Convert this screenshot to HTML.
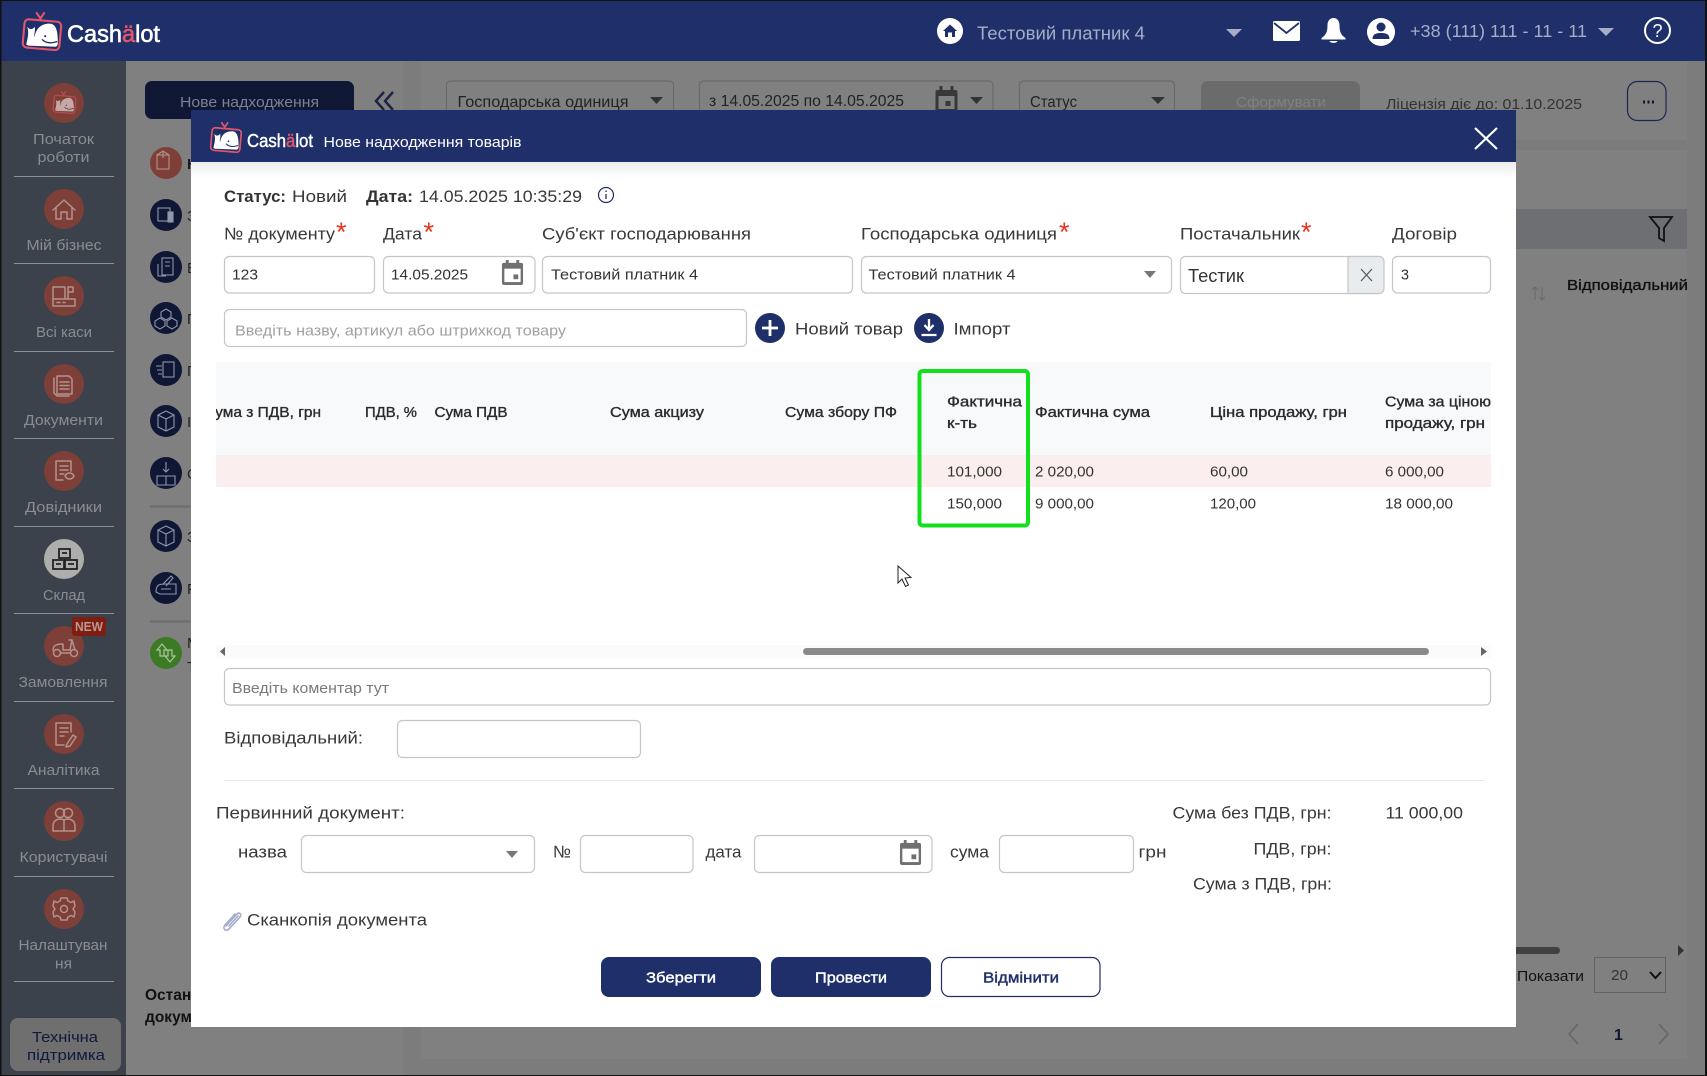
<!DOCTYPE html>
<html lang="uk">
<head>
<meta charset="utf-8">
<title>Cashälot — Нове надходження товарів</title>
<style>
html,body{margin:0;padding:0;background:#808080;width:1707px;height:1076px;overflow:hidden}
svg{display:block}
text{font-family:"Liberation Sans","DejaVu Sans",sans-serif;white-space:pre}
.s{font-size:15px;fill:#8b8d90}
.l{font-size:17px;fill:#383838}
.i{font-size:15px;fill:#333}
.h{font-size:14.5px;fill:#2b2b2b;stroke:#2b2b2b;stroke-width:.35}
.c{font-size:14.5px;fill:#333}
.b{font-size:15px;stroke-width:.4}
.dim{font-size:15px;fill:#222}
.box{fill:#fff;stroke:#c6c6c6;stroke-width:1.2}
.ic{fill:none;stroke:#b3928c;stroke-width:1.5;stroke-linejoin:round;stroke-linecap:round}
</style>
</head>
<body>
<svg xmlns="http://www.w3.org/2000/svg" width="1707" height="1076" viewBox="0 0 1707 1076">
<defs>
<linearGradient id="sh" x1="0" y1="0" x2="0" y2="1"><stop offset="0" stop-color="#ececec"/><stop offset="1" stop-color="#fff"/></linearGradient>
<clipPath id="tb"><rect x="216" y="362" width="1275" height="170"/></clipPath>
<symbol id="logo" viewBox="0 0 40 37">
<path d="M15 1 L18.5 6 L22 1 M18.5 6 V8" fill="none" stroke="#e2566a" stroke-width="2" stroke-linecap="round"/>
<rect x="2.5" y="8" width="35" height="27" rx="4" transform="rotate(5 20 21)" fill="none" stroke="#e2566a" stroke-width="2"/>
<path d="M5 31 C6 25 8 21 6 14 C8 17 11 17 13 14 C14 18 12 21 13 24 C14 16 19 11 27 11 C33 11 35.500 17 35 31 L33.500 33 L7 32 Z" fill="#fff"/>
<path d="M20 26 C24 30 29 30 34.500 28" fill="none" stroke="#1e2f6a" stroke-width="1.2"/>
<circle cx="23" cy="23" r="1" fill="#1e2f6a"/>
</symbol>
<symbol id="cal" viewBox="0 0 24 26">
<rect x="1" y="3" width="22" height="23" rx="2" fill="#707070"/>
<rect x="5" y="0" width="3" height="5" fill="#707070"/><rect x="16" y="0" width="3" height="5" fill="#707070"/>
<rect x="3.500" y="9" width="17" height="14" fill="#fff"/><rect x="13" y="15" width="5" height="5" fill="#707070"/>
</symbol>
</defs>

<!-- page background -->
<rect width="1707" height="1076" fill="#7c7c7c"/>
<rect x="126" y="61" width="277" height="1015" fill="#808080"/>
<rect x="421" y="61" width="1266" height="998" fill="#808080"/>
<rect x="421" y="140" width="1266" height="10" fill="#7b7b7b"/>
<rect x="421" y="209" width="1266" height="40" fill="#6e6f73"/>

<!-- top bar -->
<rect width="1707" height="61" fill="#1e2f6a"/>
<use href="#logo" x="21" y="12" width="42" height="39"/>
<text x="67" y="42" font-size="24" fill="#fff" stroke="#fff" stroke-width=".6" textLength="93" lengthAdjust="spacingAndGlyphs">Cash<tspan fill="#e2566a" stroke="#e2566a">ä</tspan>lot</text>
<circle cx="950" cy="31" r="13" fill="#fff"/>
<path d="M943 31 L950 24.500 L957 31 H955 V37 H952 V32.500 H948 V37 H945 V31 Z" fill="#1e2f6a"/>
<text x="977" y="39.500" font-size="18" fill="#a5aec6" textLength="168" lengthAdjust="spacingAndGlyphs">Тестовий платник 4</text>
<path d="M1226 29 H1242 L1234 37 Z" fill="#a5aec6"/>
<rect x="1273" y="21" width="27" height="20" rx="1.500" fill="#fff"/>
<path d="M1274 23 L1286.500 33 L1299 23" fill="none" stroke="#1e2f6a" stroke-width="1.800"/>
<path d="M1333.500 18 C1337 18 1339.500 21 1339.500 25 C1339.500 32 1341 35 1345.500 38 V39.500 H1321.500 V38 C1326 35 1327.500 32 1327.500 25 C1327.500 21 1330 18 1333.500 18 Z" fill="#fff"/>
<path d="M1329.500 41 H1337.500 C1337 43.500 1330 43.500 1329.500 41 Z" fill="#fff"/>
<circle cx="1381" cy="32" r="14" fill="#fff"/>
<circle cx="1381" cy="27" r="4.500" fill="#1e2f6a"/>
<path d="M1372.500 39 C1372.500 34 1376 33 1381 33 C1386 33 1389.500 34 1389.500 39 Z" fill="#1e2f6a"/>
<text x="1410" y="37" font-size="17.500" fill="#a5aec6" textLength="177" lengthAdjust="spacingAndGlyphs">+38 (111) 111 - 11 - 11</text>
<path d="M1598 28 H1614 L1606 36 Z" fill="#a5aec6"/>
<circle cx="1657.500" cy="30.500" r="12.500" fill="none" stroke="#fff" stroke-width="2"/>
<text x="1657.500" y="37" font-size="18" fill="#fff" text-anchor="middle">?</text>

<!-- sidebar -->
<rect y="61" width="126" height="1015" fill="#3b424c"/>
<g fill="#7e3f38">
<circle cx="64" cy="103" r="20"/><circle cx="64" cy="209" r="20"/><circle cx="64" cy="296" r="20"/><circle cx="64" cy="384" r="20"/><circle cx="64" cy="471" r="20"/><circle cx="64" cy="646" r="20"/><circle cx="64" cy="734" r="20"/><circle cx="64" cy="821" r="20"/><circle cx="64" cy="909" r="20"/>
</g>
<circle cx="64" cy="559" r="20" fill="#aeaeae"/>
<g stroke="#8d9097" stroke-width="1" fill="none">
<path d="M14 176.500H114M14 263.500H114M14 351.500H114M14 438.500H114M14 526.500H114M14 613.500H114M14 701.500H114M14 788.500H114M14 876.500H114M14 981.500H114"/>
</g>
<use href="#logo" x="52" y="91" width="25" height="23" opacity=".55"/>
<path class="ic" d="M53 210 L64 200 L75 210 M56 208 V219 H61 V212 H67 V219 H72 V208"/>
<path class="ic" d="M53 299 H75 V306 H53 Z M53 299 V287 H65 V299 M68 299 V292 H73 V287 H68 V292 M57 302.500 H60 M63 302.500 H65"/>
<path class="ic" d="M57 376 H69 L72 379 V394 H57 Z M54 378 V393 L57 396 H69 M60 382 H69 M60 385.500 H69 M60 389 H69"/>
<path class="ic" d="M56 461 H71 V471 M56 461 V480 H63 M60 466 H68 M60 470 H68 M60 474 H64"/>
<path class="ic" d="M65 476 C67 472 72 472 74 476 C72 480 67 480 65 476 Z"/>
<g fill="none" stroke="#222" stroke-width="1.800">
<rect x="59" y="549" width="11" height="9"/><rect x="53" y="560" width="11" height="9"/><rect x="65" y="560" width="12" height="9"/>
<path d="M62 553H67M56 564H61M68 564H74"/>
</g>
<circle class="ic" cx="57" cy="653" r="3.500"/><circle class="ic" cx="74" cy="653" r="3.500"/>
<path class="ic" d="M53 650 C53 645 57 644 63 644 V650 H70 L72 640 H69 M72 640 L75 650 M60.500 653 H70"/>
<rect x="72" y="617" width="34" height="19" rx="3" fill="#7f1d10"/>
<text x="75" y="631" font-size="13" font-weight="bold" fill="#b99a94" textLength="28" lengthAdjust="spacingAndGlyphs">NEW</text>
<path class="ic" d="M56 723 H71 V732 M56 723 V745 H64 M60 728 H68 M60 732 H68 M60 736 H64 M67 744 L73 735 L76 737 L70 746 L66 747 Z"/>
<circle class="ic" cx="60" cy="813" r="4.500"/><circle class="ic" cx="68" cy="813" r="4.500"/>
<path class="ic" d="M53 831 V826 C53 821 57 819 60 819 C63 819 64 820 64 821 C64 820 65 819 68 819 C71 819 75 821 75 826 V831 Z M64 822 V831"/>
<circle class="ic" cx="64" cy="909" r="3.500"/>
<path class="ic" d="M61 898 H67 L68 901 L71 902.500 L74 901 L75 906 L73 909 L75 912 L74 917 L71 915.500 L68 917 L67 920 H61 L60 917 L57 915.500 L54 917 L53 912 L55 909 L53 906 L54 901 L57 902.500 L60 901 Z"/>
<text class="s" x="33" y="144" textLength="61" lengthAdjust="spacingAndGlyphs">Початок</text>
<text class="s" x="37.500" y="162" textLength="52" lengthAdjust="spacingAndGlyphs">роботи</text>
<text class="s" x="26.500" y="250" textLength="75" lengthAdjust="spacingAndGlyphs">Мій бізнес</text>
<text class="s" x="36" y="337" textLength="56" lengthAdjust="spacingAndGlyphs">Всі каси</text>
<text class="s" x="24" y="425" textLength="79" lengthAdjust="spacingAndGlyphs">Документи</text>
<text class="s" x="25" y="512" textLength="77" lengthAdjust="spacingAndGlyphs">Довідники</text>
<text class="s" x="43" y="600" textLength="42" lengthAdjust="spacingAndGlyphs">Склад</text>
<text class="s" x="18.500" y="687" textLength="89" lengthAdjust="spacingAndGlyphs">Замовлення</text>
<text class="s" x="27.500" y="775" textLength="72" lengthAdjust="spacingAndGlyphs">Аналітика</text>
<text class="s" x="19.500" y="862" textLength="88" lengthAdjust="spacingAndGlyphs">Користувачі</text>
<text class="s" x="18.500" y="950" textLength="89" lengthAdjust="spacingAndGlyphs">Налаштуван</text>
<text class="s" x="55" y="968.500" textLength="17" lengthAdjust="spacingAndGlyphs">ня</text>
<rect x="10" y="1018" width="111" height="53" rx="8" fill="#6f6f6f"/>
<text x="32" y="1042" font-size="15" fill="#0f1a3d" textLength="66" lengthAdjust="spacingAndGlyphs">Технічна</text>
<text x="27" y="1060" font-size="15" fill="#0f1a3d" textLength="78" lengthAdjust="spacingAndGlyphs">підтримка</text>

<!-- dimmed content left -->
<rect x="145" y="81" width="209" height="38" rx="7" fill="#0f1734"/>
<text x="180" y="107" font-size="15" fill="#7c8294" textLength="139" lengthAdjust="spacingAndGlyphs">Нове надходження</text>
<path d="M384 92 L376 101 L384 110 M393 92 L385 101 L393 110" fill="none" stroke="#1b2542" stroke-width="2.500"/>
<circle cx="166" cy="163" r="16" fill="#7e3f38"/>
<g fill="#0f1734">
<circle cx="166" cy="215" r="16"/><circle cx="166" cy="267" r="16"/><circle cx="166" cy="318" r="16"/><circle cx="166" cy="370" r="16"/><circle cx="166" cy="421" r="16"/><circle cx="166" cy="473" r="16"/><circle cx="166" cy="536" r="16"/><circle cx="166" cy="588" r="16"/>
</g>
<circle cx="166" cy="653" r="16" fill="#3d7a24"/>
<g fill="none" stroke="#8f97ab" stroke-width="1.100">
<rect x="157" y="155" width="12" height="14" stroke="#b3928c"/><path d="M157 155 L163 151 L169 155 M163 151 V158" stroke="#b3928c"/>
<rect x="158" y="208" width="12" height="13"/><rect x="168" y="212" width="5" height="10" fill="#8f97ab"/>
<rect x="162" y="258" width="11" height="17"/><path d="M158 264 V276 H166 M165 262 H170 M165 266 H170"/>
<path d="M166 309 L171 312 V317 L166 320 L161 317 V312 Z M160 318 L165 321 V326 L160 329 L155 326 V321 Z M172 318 L177 321 V326 L172 329 L167 326 V321 Z"/>
<rect x="163" y="362" width="11" height="15"/><path d="M156 366 H162 M157 370 H162 M158 374 H162"/>
<path d="M158 415 L166 411 L174 415 V427 L166 431 L158 427 Z M158 415 L166 419 L174 415 M166 419 V431"/>
<path d="M166 462 V472 M163 469 L166 472 L169 469 M157 476 H175 V485 H157 Z M166 476 V485"/>
<path d="M158 530 L166 526 L174 530 V542 L166 546 L158 542 Z M158 530 L166 534 L174 530 M166 534 V546"/>
<path d="M156 592 C156 584 160 584 166 584 H176 V594 H160 Z M163 584 L171 576 L173 578 L166 586 M161 589 H171"/>
</g>
<path d="M162 644 L157 650 H160 V656 H164 V650 H167 Z M170 662 L175 656 H172 V650 H168 V656 H165 Z" fill="none" stroke="#aac79e" stroke-width="1.200"/>
<path d="M150 506.500H200M150 621.500H200" stroke="#6d6d6d" stroke-width="2"/>
<text x="187" y="169" font-size="15" font-weight="bold" fill="#1a1a1a">Н</text>
<text class="dim" x="187" y="221">З</text>
<text class="dim" x="187" y="273">В</text>
<text class="dim" x="187" y="324">П</text>
<text class="dim" x="187" y="376">П</text>
<text class="dim" x="187" y="427">І</text>
<text class="dim" x="187" y="479">О</text>
<text class="dim" x="187" y="542">З</text>
<text class="dim" x="187" y="594">Р</text>
<text class="dim" x="187" y="648">М</text>
<text class="dim" x="187" y="672">Т</text>
<text x="145" y="1000" font-size="15.500" font-weight="bold" fill="#111">Останні</text>
<text x="145" y="1022" font-size="15.500" font-weight="bold" fill="#111">документи</text>

<!-- dimmed filters -->
<g fill="none" stroke="#6a6a6a" stroke-width="1.200">
<rect x="446.500" y="81" width="227" height="50" rx="4"/><rect x="699.500" y="81" width="293.500" height="50" rx="4"/><rect x="1019.500" y="81" width="155" height="50" rx="4"/>
</g>
<text x="457.500" y="107" font-size="15.500" fill="#222" textLength="171" lengthAdjust="spacingAndGlyphs">Господарська одиниця</text>
<path d="M650 97 H663 L656.500 104 Z M970 97 H983 L976.500 104 Z M1151 97 H1165 L1158 104 Z" fill="#333"/>
<text x="709" y="106" font-size="15.500" fill="#222" textLength="195" lengthAdjust="spacingAndGlyphs">з 14.05.2025 по 14.05.2025</text>
<rect x="935.500" y="90" width="22" height="30" rx="2" fill="#383838"/>
<rect x="939.500" y="86" width="3" height="6" fill="#383838"/><rect x="950.500" y="86" width="3" height="6" fill="#383838"/>
<rect x="938.500" y="96" width="16" height="13" fill="#808080"/><rect x="945.500" y="101" width="5" height="5" fill="#383838"/>
<text x="1030" y="107" font-size="15.500" fill="#222" textLength="47" lengthAdjust="spacingAndGlyphs">Статус</text>
<rect x="1201" y="81" width="159" height="40" rx="7" fill="#6b6b6b"/>
<text x="1236" y="107" font-size="15" fill="#808080" textLength="90" lengthAdjust="spacingAndGlyphs">Сформувати</text>
<text x="1386" y="109" font-size="15" fill="#333" textLength="196" lengthAdjust="spacingAndGlyphs">Ліцензія діє до: 01.10.2025</text>
<rect x="1627.500" y="81.500" width="38.500" height="39" rx="10" fill="none" stroke="#1a2650" stroke-width="1.200"/>
<path d="M1643 102H1645M1647.500 102H1649.500M1652 102H1654" stroke="#0f1734" stroke-width="3"/>

<!-- dimmed table right -->
<path d="M1650 217 H1672 L1664 228 V241 L1659 238 V228 Z" fill="none" stroke="#111" stroke-width="1.800"/>
<path d="M1535 287 V300 M1532 290 L1535 287 L1538 290 M1542 287 V300 M1539 297 L1542 300 L1545 297" fill="none" stroke="#6a6a6a" stroke-width="1.100"/>
<text x="1567" y="290" font-size="14.500" fill="#111" stroke="#111" stroke-width=".35" textLength="121" lengthAdjust="spacingAndGlyphs">Відповідальний</text>
<rect x="1400" y="947" width="160" height="7" rx="3.500" fill="#414141"/>
<path d="M1678 945 L1684 950.500 L1678 956 Z" fill="#333"/>
<text x="1517" y="981" font-size="15" fill="#111" textLength="67" lengthAdjust="spacingAndGlyphs">Показати</text>
<rect x="1594.500" y="957.500" width="71" height="35" fill="none" stroke="#636363"/>
<text x="1611" y="980" font-size="15" fill="#333" textLength="17" lengthAdjust="spacingAndGlyphs">20</text>
<path d="M1650 972 L1655.500 978 L1661 972" fill="none" stroke="#111" stroke-width="2"/>
<path d="M1578 1024 L1569 1034 L1578 1044 M1659 1024 L1668 1034 L1659 1044" fill="none" stroke="#6a6a6a" stroke-width="2"/>
<text x="1614" y="1040" font-size="16" font-weight="bold" fill="#0f1734">1</text>

<!-- window edges -->
<rect width="1707" height="1" fill="#111"/><rect width="1.500" height="1076" fill="#111"/>
<rect y="1075" width="1707" height="1" fill="#111"/><rect x="1705" width="2" height="1076" fill="#111"/>

<!-- MODAL -->
<rect x="191" y="110" width="1325" height="917" fill="#fff"/>
<rect x="191" y="110" width="1325" height="52" fill="#1e2f6a"/>
<rect x="191" y="162" width="1325" height="16" fill="url(#sh)"/>
<use href="#logo" x="209" y="122" width="34" height="31"/>
<text x="247" y="147" font-size="18.500" fill="#fff" stroke="#fff" stroke-width=".45" textLength="66" lengthAdjust="spacingAndGlyphs">Cash<tspan fill="#e2566a" stroke="#e2566a">ä</tspan>lot</text>
<text x="323.500" y="147" font-size="15" fill="#fff" textLength="198" lengthAdjust="spacingAndGlyphs">Нове надходження товарів</text>
<path d="M1475 128 L1497 149 M1497 128 L1475 149" stroke="#fff" stroke-width="2.200"/>

<text x="224" y="202" font-size="17" font-weight="bold" fill="#333" textLength="62" lengthAdjust="spacingAndGlyphs">Статус:</text>
<text class="l" x="292" y="202" textLength="55" lengthAdjust="spacingAndGlyphs">Новий</text>
<text x="366" y="202" font-size="17" font-weight="bold" fill="#333" textLength="47" lengthAdjust="spacingAndGlyphs">Дата:</text>
<text class="l" x="419" y="202" textLength="163" lengthAdjust="spacingAndGlyphs">14.05.2025 10:35:29</text>
<circle cx="606" cy="195" r="7.500" fill="none" stroke="#1e2f6a" stroke-width="1.200"/>
<path d="M606 194 V199 M606 190.500 V192" stroke="#1e2f6a" stroke-width="1.300"/>

<text class="l" x="224" y="239.500" textLength="111" lengthAdjust="spacingAndGlyphs">№ документу</text>
<text class="l" x="383" y="239.500" textLength="39" lengthAdjust="spacingAndGlyphs">Дата</text>
<text class="l" x="542" y="239.500" textLength="209" lengthAdjust="spacingAndGlyphs">Суб'єкт господарювання</text>
<text class="l" x="861" y="239.500" textLength="196" lengthAdjust="spacingAndGlyphs">Господарська одиниця</text>
<text class="l" x="1180" y="239.500" textLength="120" lengthAdjust="spacingAndGlyphs">Постачальник</text>
<text class="l" x="1392" y="239.500" textLength="65" lengthAdjust="spacingAndGlyphs">Договір</text>
<g font-size="27" fill="#e8321c">
<text x="336" y="241">*</text><text x="423.500" y="241">*</text><text x="1059" y="241">*</text><text x="1301" y="241">*</text>
</g>

<rect class="box" x="224.500" y="256.500" width="150" height="36.500" rx="5"/>
<text class="i" x="232" y="279.500" textLength="26" lengthAdjust="spacingAndGlyphs">123</text>
<rect class="box" x="383.500" y="256.500" width="151.500" height="36.500" rx="5"/>
<text class="i" x="391" y="279.500" textLength="77" lengthAdjust="spacingAndGlyphs">14.05.2025</text>
<use href="#cal" x="501" y="260" width="23" height="25"/>
<rect class="box" x="542.500" y="256.500" width="310" height="36.500" rx="5"/>
<text class="i" x="551" y="279.500" textLength="147" lengthAdjust="spacingAndGlyphs">Тестовий платник 4</text>
<rect class="box" x="861.500" y="256.500" width="310" height="36.500" rx="5"/>
<text class="i" x="868.500" y="279.500" textLength="147" lengthAdjust="spacingAndGlyphs">Тестовий платник 4</text>
<path d="M1144 271 H1156 L1150 278 Z" fill="#777"/>
<rect class="box" x="1180.500" y="256.500" width="203" height="37" rx="5"/>
<path d="M1348 256.500 H1379 A5 5 0 0 1 1384 261.500 V288.500 A5 5 0 0 1 1379 293.500 H1348 Z" fill="#e9ecef" stroke="#c6c6c6" stroke-width="1.200"/>
<path d="M1361 269 L1372 281 M1372 269 L1361 281" stroke="#555" stroke-width="1.200"/>
<text x="1188" y="282" font-size="18" fill="#333" textLength="56" lengthAdjust="spacingAndGlyphs">Тестик</text>
<rect class="box" x="1392.500" y="256.500" width="98" height="36.500" rx="5"/>
<text class="i" x="1401" y="279.500" textLength="8" lengthAdjust="spacingAndGlyphs">3</text>

<rect class="box" x="224.500" y="309.500" width="522" height="37" rx="5"/>
<text x="235" y="335.500" font-size="15" fill="#a0a0a0" textLength="331" lengthAdjust="spacingAndGlyphs">Введіть назву, артикул або штрихкод товару</text>
<circle cx="770" cy="328" r="15" fill="#1e2f6a"/>
<path d="M762 328 H778 M770 320 V336" stroke="#fff" stroke-width="2.800"/>
<text class="l" x="795" y="334.500" textLength="108" lengthAdjust="spacingAndGlyphs">Новий товар</text>
<circle cx="929" cy="328" r="15" fill="#1e2f6a"/>
<path d="M929 319 V329 M924.500 325 L929 330 L933.500 325 M921.500 335 H936.500" fill="none" stroke="#fff" stroke-width="2.300"/>
<text class="l" x="953.500" y="334.500" textLength="57" lengthAdjust="spacingAndGlyphs">Імпорт</text>

<!-- table -->
<rect x="216" y="362" width="1275" height="93" fill="#f8f9fb"/>
<rect x="216" y="455" width="1275" height="32" fill="#fbeeee"/>
<g clip-path="url(#tb)">
<text class="h" x="204" y="417" textLength="117" lengthAdjust="spacingAndGlyphs">Сума з ПДВ, грн</text>
<text class="h" x="365" y="417" textLength="52" lengthAdjust="spacingAndGlyphs">ПДВ, %</text>
<text class="h" x="434.500" y="417" textLength="73" lengthAdjust="spacingAndGlyphs">Сума ПДВ</text>
<text class="h" x="610" y="417" textLength="94" lengthAdjust="spacingAndGlyphs">Сума акцизу</text>
<text class="h" x="785" y="417" textLength="112" lengthAdjust="spacingAndGlyphs">Сума збору ПФ</text>
<text class="h" x="947" y="406.500" textLength="75" lengthAdjust="spacingAndGlyphs">Фактична</text>
<text class="h" x="947" y="428" textLength="30" lengthAdjust="spacingAndGlyphs">к-ть</text>
<text class="h" x="1035" y="417" textLength="115" lengthAdjust="spacingAndGlyphs">Фактична сума</text>
<text class="h" x="1210" y="417" textLength="137" lengthAdjust="spacingAndGlyphs">Ціна продажу, грн</text>
<text class="h" x="1385" y="406.500" textLength="106" lengthAdjust="spacingAndGlyphs">Сума за ціною</text>
<text class="h" x="1385" y="428" textLength="100" lengthAdjust="spacingAndGlyphs">продажу, грн</text>
<text class="c" x="947" y="476.500" textLength="55" lengthAdjust="spacingAndGlyphs">101,000</text>
<text class="c" x="1035" y="476.500" textLength="59" lengthAdjust="spacingAndGlyphs">2 020,00</text>
<text class="c" x="1210" y="476.500" textLength="38" lengthAdjust="spacingAndGlyphs">60,00</text>
<text class="c" x="1385" y="476.500" textLength="59" lengthAdjust="spacingAndGlyphs">6 000,00</text>
<text class="c" x="947" y="508.500" textLength="55" lengthAdjust="spacingAndGlyphs">150,000</text>
<text class="c" x="1035" y="508.500" textLength="59" lengthAdjust="spacingAndGlyphs">9 000,00</text>
<text class="c" x="1210" y="508.500" textLength="46" lengthAdjust="spacingAndGlyphs">120,00</text>
<text class="c" x="1385" y="508.500" textLength="68" lengthAdjust="spacingAndGlyphs">18 000,00</text>
</g>
<rect x="919.500" y="371" width="108.500" height="154.500" rx="3" fill="none" stroke="#12df1e" stroke-width="4"/>
<path d="M898 566 V583 L902 579 L905.500 586.500 L908.500 585 L905 578 L911 577.500 Z" fill="#fff" stroke="#222" stroke-width="1"/>

<rect x="216" y="645" width="1275" height="13" fill="#fbfbfb"/>
<path d="M225 647 L220 651.500 L225 656 Z M1481 647 L1487 651.500 L1481 656 Z" fill="#666"/>
<rect x="803" y="648" width="626" height="7" rx="3.500" fill="#8a8a8a"/>

<rect class="box" x="224.500" y="668.500" width="1266" height="36.500" rx="5"/>
<text x="232" y="693" font-size="15" fill="#7a7a7a" textLength="157" lengthAdjust="spacingAndGlyphs">Введіть коментар тут</text>

<text class="l" x="224" y="743.500" textLength="139" lengthAdjust="spacingAndGlyphs">Відповідальний:</text>
<rect class="box" x="397.500" y="720.500" width="243" height="37" rx="5"/>
<rect x="224" y="780" width="1260" height="1" fill="#e6e6e6"/>

<text class="l" x="216" y="818.500" textLength="189" lengthAdjust="spacingAndGlyphs">Первинний документ:</text>
<text class="l" x="238" y="857.500" textLength="49" lengthAdjust="spacingAndGlyphs">назва</text>
<rect class="box" x="301.500" y="835.500" width="233" height="37" rx="5"/>
<path d="M506 851 H518 L512 858 Z" fill="#777"/>
<text class="l" x="553" y="857.500" textLength="18" lengthAdjust="spacingAndGlyphs">№</text>
<rect class="box" x="580.500" y="835.500" width="112.500" height="37" rx="5"/>
<text class="l" x="705.500" y="857.500" textLength="36" lengthAdjust="spacingAndGlyphs">дата</text>
<rect class="box" x="754.500" y="835.500" width="177.500" height="37" rx="5"/>
<use href="#cal" x="899" y="840" width="23" height="25"/>
<text class="l" x="950" y="857.500" textLength="39" lengthAdjust="spacingAndGlyphs">сума</text>
<rect class="box" x="999.500" y="835.500" width="134" height="37" rx="5"/>
<text class="l" x="1138.500" y="857.500" textLength="28" lengthAdjust="spacingAndGlyphs">грн</text>

<text class="l" x="1172.500" y="818.500" textLength="159" lengthAdjust="spacingAndGlyphs">Сума без ПДВ, грн:</text>
<text class="l" x="1253.500" y="854.500" textLength="78" lengthAdjust="spacingAndGlyphs">ПДВ, грн:</text>
<text class="l" x="1193" y="889.500" textLength="139" lengthAdjust="spacingAndGlyphs">Сума з ПДВ, грн:</text>
<text class="l" x="1385.500" y="818.500" textLength="77.500" lengthAdjust="spacingAndGlyphs">11 000,00</text>

<path d="M226 926 L237 914 C239 912 242 914 240 917 L229 929 C226 932 222 929 225 925 L235 914 M229 926 L238 916" fill="none" stroke="#a4aecb" stroke-width="1.600" stroke-linecap="round"/>
<text class="l" x="247" y="925.500" textLength="180" lengthAdjust="spacingAndGlyphs">Сканкопія документа</text>

<rect x="601" y="957" width="160" height="40" rx="8" fill="#1e2f6a"/>
<text class="b" x="646" y="982.500" fill="#fff" stroke="#fff" textLength="70" lengthAdjust="spacingAndGlyphs">Зберегти</text>
<rect x="771" y="957" width="160" height="40" rx="8" fill="#1e2f6a"/>
<text class="b" x="815" y="982.500" fill="#fff" stroke="#fff" textLength="72" lengthAdjust="spacingAndGlyphs">Провести</text>
<rect x="941.500" y="957.500" width="158.500" height="39" rx="8" fill="#fff" stroke="#1e2f6a" stroke-width="1.200"/>
<text class="b" x="983" y="982.500" fill="#1e2f6a" stroke="#1e2f6a" textLength="76" lengthAdjust="spacingAndGlyphs">Відмінити</text>
</svg>
</body>
</html>
